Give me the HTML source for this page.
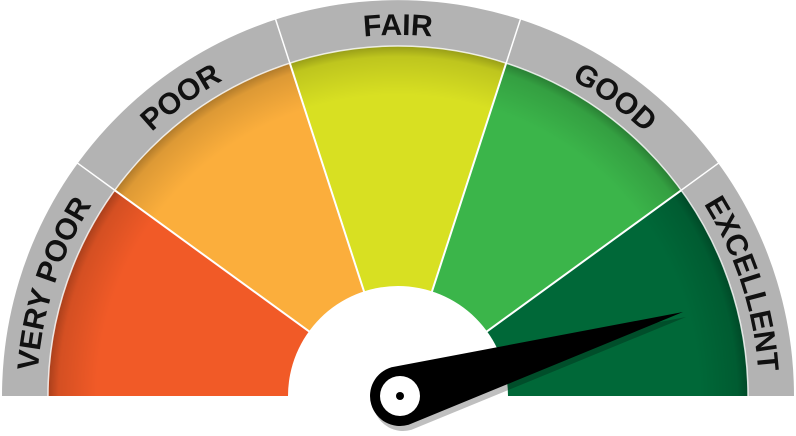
<!DOCTYPE html>
<html><head><style>
html,body{margin:0;padding:0;background:#fff;width:796px;height:436px;overflow:hidden}
</style></head><body>
<svg width="796" height="436" viewBox="0 0 796 436" xmlns="http://www.w3.org/2000/svg">
<defs>
<radialGradient id="sh" cx="398" cy="396" r="350" gradientUnits="userSpaceOnUse">
<stop offset="0.86" stop-color="#000" stop-opacity="0"/>
<stop offset="0.97" stop-color="#000" stop-opacity="0.12"/>
<stop offset="1" stop-color="#000" stop-opacity="0.3"/>
</radialGradient>
<path id="arc" d="M37,396 A361,361 0 0 1 759,396"/>
</defs>
<path d="M2,396 A396,396 0 0 1 794,396 Z" fill="#b3b3b3"/>
<g stroke="#fff" stroke-width="1.5">
<line x1="398" y1="396" x2="77.6" y2="163.2"/>
<line x1="398" y1="396" x2="275.6" y2="19.4"/>
<line x1="398" y1="396" x2="520.4" y2="19.4"/>
<line x1="398" y1="396" x2="718.4" y2="163.2"/>
</g>
<path d="M398,396 L48,396 A350,350 0 0 1 114.8,190.3 Z" fill="#f15a27"/>
<path d="M398,396 L114.8,190.3 A350,350 0 0 1 289.8,63.1 Z" fill="#fbae3c"/>
<path d="M398,396 L289.8,63.1 A350,350 0 0 1 506.2,63.1 Z" fill="#d8e022"/>
<path d="M398,396 L506.2,63.1 A350,350 0 0 1 681.2,190.3 Z" fill="#3bb54a"/>
<path d="M398,396 L681.2,190.3 A350,350 0 0 1 748,396 Z" fill="#006838"/>
<path d="M48,396 A350,350 0 0 1 748,396 Z" fill="url(#sh)"/>
<path d="M48,396 A350,350 0 0 1 748,396" fill="none" stroke="#fff" stroke-width="1.5" opacity="0.8"/>
<g stroke="#fff" stroke-width="2">
<line x1="398" y1="396" x2="114.8" y2="190.3"/>
<line x1="398" y1="396" x2="289.8" y2="63.1"/>
<line x1="398" y1="396" x2="506.2" y2="63.1"/>
<line x1="398" y1="396" x2="681.2" y2="190.3"/>
</g>
<path d="M288,396 A110,110 0 0 1 508,396 Z" fill="#fff"/>
<rect x="0" y="396" width="796" height="40" fill="#fff"/>
<g font-family="Liberation Sans, sans-serif" font-weight="bold" font-size="30" fill="#111" text-anchor="middle">
<text><textPath href="#arc" startOffset="10%">VERY POOR</textPath></text>
<text><textPath href="#arc" startOffset="30%">POOR</textPath></text>
<text><textPath href="#arc" startOffset="50%">FAIR</textPath></text>
<text><textPath href="#arc" startOffset="70%">GOOD</textPath></text>
<text><textPath href="#arc" startOffset="90%">EXCELLENT</textPath></text>
</g>
<g transform="translate(3,5)" opacity="0.25">
<path d="M391.5,367.2 L683,312 L408.6,424.8 A30,30 0 0 1 391.5,367.2 Z" fill="#000"/>
</g>
<path d="M391.5,367.2 L683,312 L408.6,424.8 A30,30 0 0 1 391.5,367.2 Z" fill="#000"/>
<circle cx="400" cy="396" r="20" fill="#fff"/>
<circle cx="400" cy="396" r="4" fill="#000"/>
</svg>
</body></html>
